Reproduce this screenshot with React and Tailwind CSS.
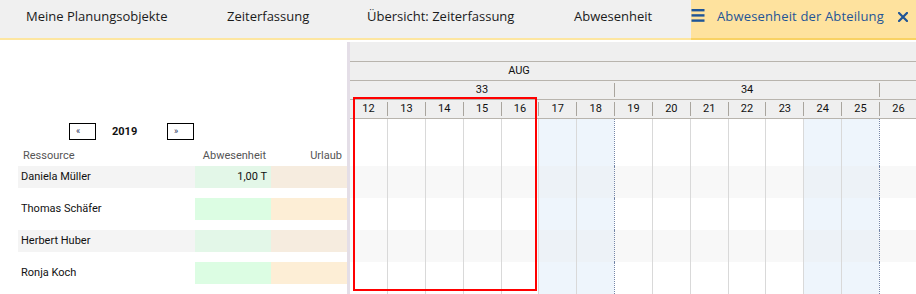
import React from "react";

const days = [12, 13, 14, 15, 16, 17, 18, 19, 20, 21, 22, 23, 24, 25, 26];
const isWeekend = (d) => d === 17 || d === 18 || d === 24 || d === 25;
const isWeekStart = (d) => d === 19 || d === 26;

function bodyCell(d, i, gray) {
  const w = i === 0 ? "w-[37px]" : "w-[37.85px]";
  const border =
    i === 0
      ? ""
      : isWeekStart(d)
      ? "border-l border-dotted border-[#7486a8]"
      : "border-l border-[#d9d9d9]";
  const bg = isWeekend(d)
    ? gray
      ? "bg-[#edf2f7]"
      : "bg-[#eef5fc]"
    : gray
    ? "bg-[#f8f8f8]"
    : "bg-white";
  return `shrink-0 h-full ${w} ${border} ${bg}`;
}

const people = [
  { name: "Daniela Müller", abs: "1,00 T", gray: true },
  { name: "Thomas Schäfer", abs: "", gray: false },
  { name: "Herbert Huber", abs: "", gray: true },
  { name: "Ronja Koch", abs: "", gray: false },
];

function Tab({ children, w, pl }) {
  return (
    <div className={`h-full border-b-2 border-[#fde6a0] ${w} ${pl} pt-[7px] leading-[18px] text-[#1b1b1b] whitespace-nowrap`}>
      {children}
    </div>
  );
}

export default function App() {
  return (
    <div className="relative w-[916px] h-[294px] overflow-hidden bg-white" style={{ fontFamily: "Roboto, Arial, sans-serif" }}>
      {/* Top tab bar */}
      <div className="flex h-[40px] bg-[#f0f0f0] text-[13px]" style={{ fontFamily: "'Open Sans', 'Noto Sans', sans-serif" }}>
        <Tab w="w-[200px]" pl="pl-[26px]">Meine Planungsobjekte</Tab>
        <Tab w="w-[140px]" pl="pl-[27px]">Zeiterfassung</Tab>
        <Tab w="w-[207px]" pl="pl-[27px]">Übersicht: Zeiterfassung</Tab>
        <Tab w="w-[144px]" pl="pl-[27px]">Abwesenheit</Tab>
        <div className="flex-1 h-full bg-[#fee29e] border-b-2 border-[#f9d264] flex items-start pt-[7px] leading-[18px] text-[#1f5597] whitespace-nowrap">
          <svg width="14" height="13" viewBox="0 0 14 13" className="mt-[2px] shrink-0">
            <rect x="0.5" y="0" width="13" height="2.4" fill="#1f5597" />
            <rect x="0.5" y="5.2" width="13" height="2.4" fill="#1f5597" />
            <rect x="0.5" y="10.4" width="13" height="2.4" fill="#1f5597" />
          </svg>
          <span className="ml-[12px] tracking-[0.15px]">Abwesenheit der Abteilung</span>
          <svg width="10" height="10" viewBox="0 0 10 10" className="ml-[14px] mt-[5px] shrink-0">
            <path d="M1 1 L9 9 M9 1 L1 9" stroke="#1f5597" strokeWidth="2.2" strokeLinecap="square" />
          </svg>
        </div>
      </div>

      {/* Main */}
      <div className="flex mt-[2px] h-[252px]">
        {/* Left panel */}
        <div className="w-[347px] shrink-0 pt-[81px]">
          <div className="flex h-[17px] items-stretch">
            <div className="ml-[69px] w-[27px] border border-black text-[9px] leading-[15px] pl-[6px] text-[#1b2a55]">«</div>
            <div className="w-[71px] pl-[16px] text-[11px] font-bold leading-[17px] text-[#111]">2019</div>
            <div className="w-[27px] border border-black text-[9px] leading-[15px] pl-[6px] text-[#1b2a55]">»</div>
          </div>
          <div className="flex h-[26px] items-end pb-[4px] ml-[18px] text-[11px] leading-[13px] text-[#555]">
            <div className="w-[177px] pl-[5px]">Ressource</div>
            <div className="w-[76px] text-right pr-[5px]">Abwesenheit</div>
            <div className="w-[76px] text-right pr-[5px]">Urlaub</div>
          </div>
          {people.map((p) => (
            <div key={p.name} className="h-[32px]">
              <div className="flex h-[22px] ml-[18px] text-[11px] leading-[22px] text-[#111]">
                <div className={p.gray ? "w-[177px] pl-[3px] bg-[#f4f4f4]" : "w-[177px] pl-[3px] bg-white"}>{p.name}</div>
                <div className={p.gray ? "w-[76px] text-right pr-[4px] bg-[#e3f7e8]" : "w-[76px] text-right pr-[4px] bg-[#dcfde3]"}>{p.abs}</div>
                <div className={p.gray ? "w-[76px] bg-[#f6ecdf]" : "w-[76px] bg-[#fdeed6]"}></div>
              </div>
            </div>
          ))}
        </div>

        {/* Separator */}
        <div className="w-[3px] shrink-0 bg-[#e4dee7]"></div>

        {/* Gantt */}
        <div className="flex-1 overflow-hidden text-[11px] text-[#111]">
          <div className="bg-[#efefef]">
            <div className="h-[20px] border-b border-[#b8b4ad]"></div>
            <div className="h-[19px] border-b border-[#b8b4ad] flex">
              <div className="w-[338px] shrink-0 text-center leading-[18px]">AUG</div>
            </div>
            <div className="h-[19px] border-b border-[#b8b4ad] flex items-center">
              <div className="w-[264.1px] shrink-0 h-[14px] text-center leading-[14px]">33</div>
              <div className="w-[264.95px] shrink-0 h-[14px] border-l border-[#a9a59e] text-center leading-[14px]">34</div>
              <div className="flex-1 h-[14px] border-l border-[#a9a59e]"></div>
            </div>
            <div className="h-[19px] border-b border-[#b8b4ad] flex items-center">
              {days.map((d, i) => (
                <div
                  key={d}
                  className={
                    i === 0
                      ? "w-[37px] shrink-0 h-[14px] text-center leading-[14px]"
                      : "w-[37.85px] shrink-0 h-[14px] border-l border-[#a9a59e] text-center leading-[14px]"
                  }
                >
                  {d}
                </div>
              ))}
            </div>
          </div>
          <div className="flex h-[47px]">
            {days.map((d, i) => (
              <div key={d} className={bodyCell(d, i, false)}></div>
            ))}
          </div>
          {people.map((p) => (
            <div key={p.name} className="flex h-[32px]">
              {days.map((d, i) => (
                <div key={d} className={bodyCell(d, i, p.gray)}></div>
              ))}
            </div>
          ))}
        </div>
      </div>

      {/* Red annotation rectangle */}
      <div className="absolute left-[353px] top-[97px] w-[184px] h-[194px] border-2 border-[#ff0000] pointer-events-none"></div>
    </div>
  );
}
